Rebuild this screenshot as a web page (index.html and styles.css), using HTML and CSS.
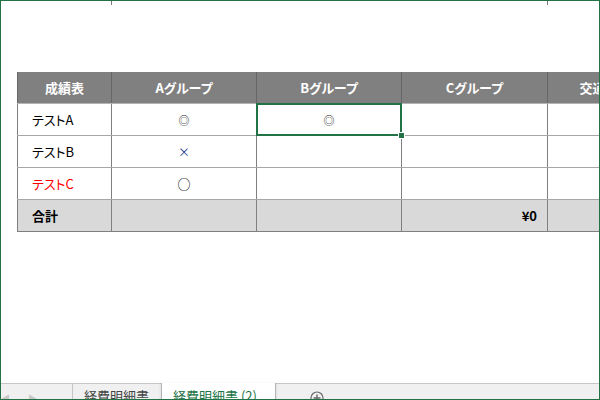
FILE: index.html
```html
<!DOCTYPE html>
<html lang="ja">
<head>
    <meta charset="UTF-8">
    <meta name="viewport" content="width=device-width, initial-scale=1.0">
    <title>成績表</title>
    <link rel="stylesheet" href="styles.css">
</head>
<body>
    <div class="window">
        <div class="ticks">
            <span class="tick-a"></span>
            <span class="tick-b"></span>
        </div>

        <div class="sheet">
            <table class="grid">
                <colgroup>
                    <col class="col-name">
                    <col class="col-group">
                    <col class="col-group">
                    <col class="col-group-c">
                    <col class="col-extra">
                </colgroup>
                <thead>
                    <tr>
                        <th>成績表</th>
                        <th>Aグループ</th>
                        <th>Bグループ</th>
                        <th>Cグループ</th>
                        <th>交通費</th>
                    </tr>
                </thead>
                <tbody>
                    <tr>
                        <td class="name">テストA</td>
                        <td class="mark"><span class="double">◎</span></td>
                        <td class="mark selected"><span class="double">◎</span></td>
                        <td></td>
                        <td></td>
                    </tr>
                    <tr>
                        <td class="name">テストB</td>
                        <td class="mark"><span class="cross">×</span></td>
                        <td></td>
                        <td></td>
                        <td></td>
                    </tr>
                    <tr>
                        <td class="name red">テストC</td>
                        <td class="mark"><span class="circle">○</span></td>
                        <td></td>
                        <td></td>
                        <td></td>
                    </tr>
                    <tr class="total">
                        <td class="name">合計</td>
                        <td></td>
                        <td></td>
                        <td class="amount">¥0</td>
                        <td></td>
                    </tr>
                </tbody>
            </table>
        </div>

        <div class="tabbar">
            <div class="tab-nav">
                <span class="arrow">&#9664;</span>
                <span class="arrow">&#9654;</span>
            </div>
            <div class="tab">経費明細書</div>
            <div class="tab active">経費明細書 (2)</div>
            <div class="tab-add">
                <svg width="14" height="14" viewBox="0 0 14 14">
                    <circle cx="7" cy="7" r="6" fill="none" stroke="#6a6a6a" stroke-width="1.2"/>
                    <path d="M7 3.5v7M3.5 7h7" stroke="#6a6a6a" stroke-width="1.4"/>
                </svg>
            </div>
        </div>
    </div>
</body>
</html>
```

FILE: styles.css
```css
html, body {
    margin: 0;
    padding: 0;
    background-color: #ffffff;
}
body {
    font-family: "Noto Sans CJK JP", sans-serif;
    font-feature-settings: "palt";
    font-size: 13px;
    color: #000;
}
.window {
    width: 600px;
    height: 400px;
    box-sizing: border-box;
    border: 1px solid #217346;
    display: flex;
    flex-direction: column;
    overflow: hidden;
}

/* column header remnants */
.ticks {
    display: flex;
    height: 4px;
    padding-left: 16px;
}
.ticks span {
    border-right: 1px solid #7a7a7a;
}
.tick-a {
    width: 94px;
}
.tick-b {
    width: 435px;
}

.sheet {
    flex: 1;
    padding-top: 67px;
    padding-left: 16px;
    overflow: hidden;
}
.grid {
    border-collapse: collapse;
    table-layout: fixed;
    width: 633px;
}
.col-name { width: 94px; }
.col-group { width: 145px; }
.col-group-c { width: 146px; }
.col-extra { width: 103px; }

.grid th,
.grid td {
    height: 31px;
    padding: 0;
    border-left: 1px solid #7f7f7f;
    border-right: 1px solid #7f7f7f;
    border-bottom: 1px solid #a6a6a6;
    white-space: nowrap;
    overflow: hidden;
}
.grid th {
    background-color: #808080;
    color: #fff;
    font-weight: bold;
    text-align: center;
    border-left-color: #666;
    border-right-color: #666;
    border-bottom-color: #b4b4b4;
}
.grid .name {
    padding-left: 14px;
}
.grid .red {
    color: #ff0000;
}
.grid .mark {
    text-align: center;
}
.double {
    font-size: 11px;
    color: #222;
}
.cross {
    font-size: 12px;
    color: #1f3b8a;
}
.circle {
    font-size: 13px;
}
.total td {
    background-color: #d9d9d9;
    font-weight: bold;
    border-bottom-color: #7f7f7f;
}
.grid .amount {
    text-align: right;
    padding-right: 10px;
}

/* active cell */
.grid .selected {
    position: relative;
    overflow: visible;
}
.selected::after {
    content: "";
    position: absolute;
    left: -1px;
    top: -1px;
    right: -1px;
    bottom: -1px;
    border: 2px solid #217346;
}
.selected::before {
    content: "";
    position: absolute;
    right: -4px;
    bottom: -4px;
    width: 5px;
    height: 5px;
    background-color: #217346;
    border: 1px solid #fff;
    z-index: 1;
}

/* sheet tabs */
.tabbar {
    height: 15px;
    display: flex;
    background-color: #f0f0f0;
    border-top: 1px solid #c6c6c6;
}
.tab-nav {
    width: 72px;
    display: flex;
    gap: 18px;
    padding-left: 0;
    border-right: 1px solid #c6c6c6;
    box-sizing: border-box;
}
.arrow {
    font-size: 9px;
    color: #c8c8c8;
    line-height: 30px;
}
.tab {
    padding: 3px 12px 0 11px;
    color: #444;
    line-height: 17px;
    white-space: nowrap;
}
.tab.active {
    background-color: #fff;
    color: #217346;
    margin-top: -1px;
    padding-top: 4px;
    padding-right: 18px;
    border-left: 1px solid #b4b4b4;
    border-right: 1px solid #b4b4b4;
    box-shadow: 0 1px 3px rgba(0, 0, 0, 0.12);
}
.tab-add {
    padding-left: 34px;
    padding-top: 6px;
}
```
